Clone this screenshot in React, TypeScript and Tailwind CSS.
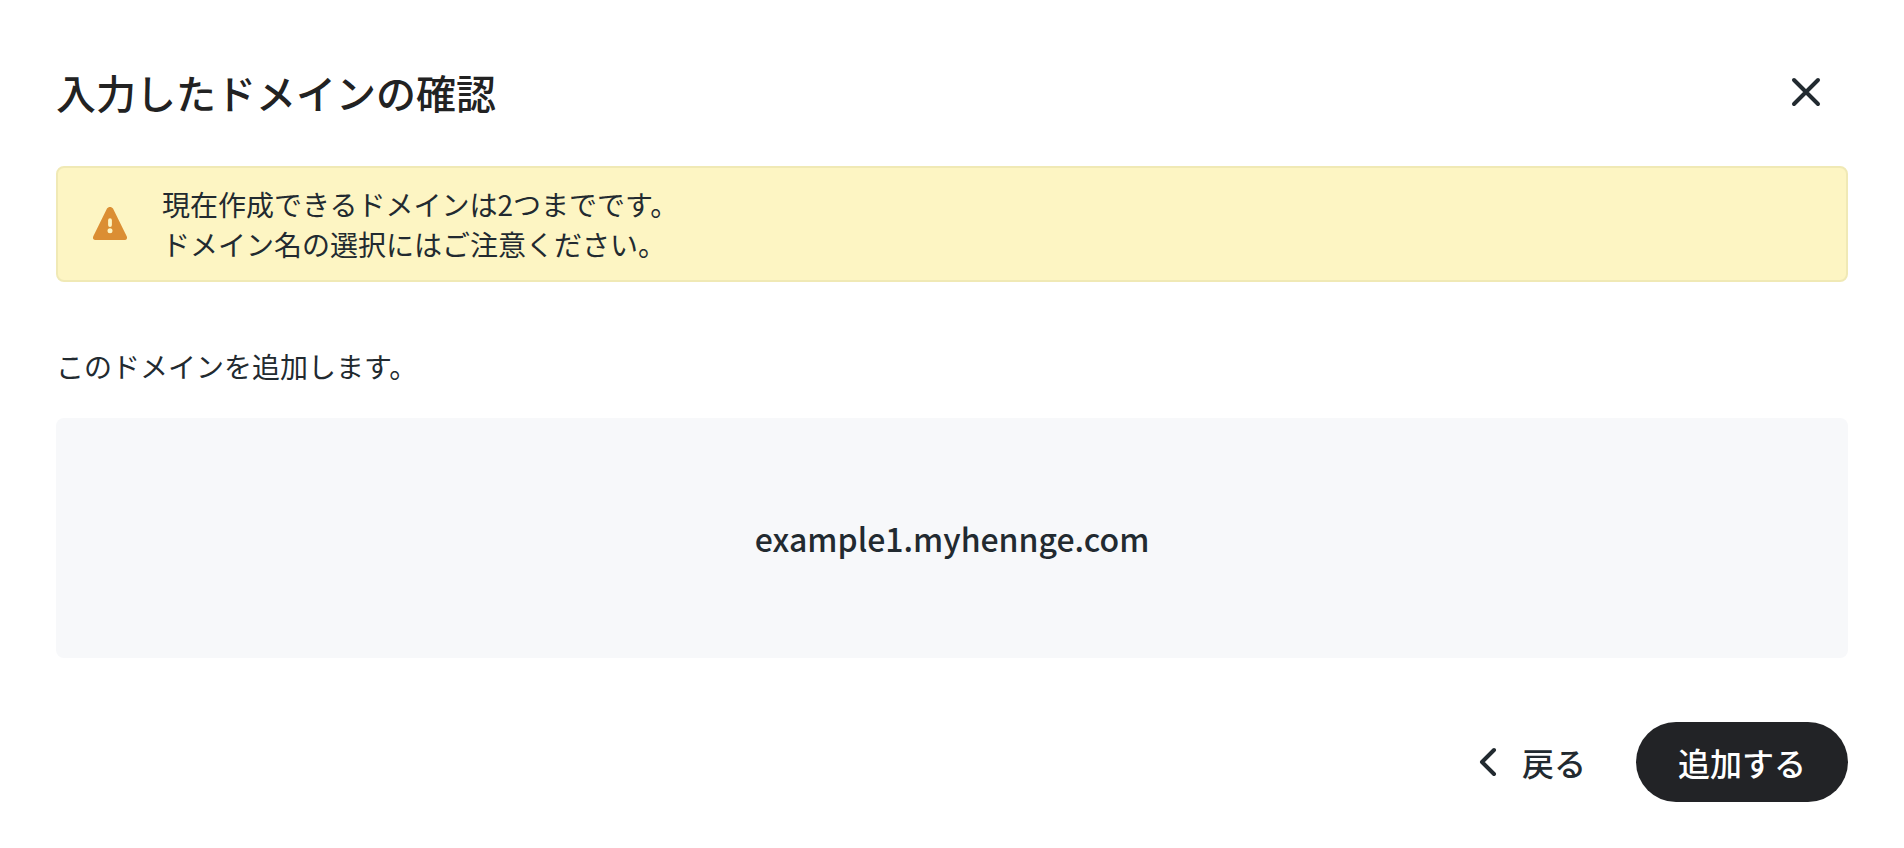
import React from 'react';

const notices = [
  "現在作成できるドメインは2つまでです。",
  "ドメイン名の選択にはご注意ください。"
];

const CloseIcon = () => (
  <svg width="32" height="32" viewBox="0 0 32 32" fill="none" stroke="currentColor" strokeWidth="4" strokeLinecap="round" aria-hidden="true">
    <path d="M4 4L28 28M28 4L4 28" />
  </svg>
);

const WarningIcon = () => (
  <svg width="36" height="36" viewBox="0 0 36 36" className="shrink-0 text-[#db8e33]" aria-hidden="true">
    <path
      fill="currentColor"
      fillRule="evenodd"
      d="M15 2.6C16.2 .4 19.8 .4 21 2.6L34.7 30.2C35.7 32.2 34.6 34 32.4 34H3.6C1.4 34 .3 32.2 1.3 30.2ZM18 12.3A1.9 1.9 0 0 0 16.1 14.2V19A1.9 1.9 0 0 0 19.9 19V14.2A1.9 1.9 0 0 0 18 12.3ZM18 22.3A2.5 2.5 0 1 0 18 27.3A2.5 2.5 0 1 0 18 22.3Z"
    />
  </svg>
);

const BackIcon = () => (
  <svg width="20" height="32" viewBox="0 0 20 32" fill="none" stroke="currentColor" strokeWidth="4" strokeLinecap="round" strokeLinejoin="round" aria-hidden="true">
    <path d="M16 4L4 16L16 28" />
  </svg>
);

export default function App() {
  return (
    <main
      lang="ja"
      className="min-h-screen bg-white px-14 pt-16 pb-11 font-['Noto_Sans_CJK_JP',sans-serif] text-[28px] leading-10 text-[#222a30]"
    >
      {/* Header */}
      <header className="flex items-center justify-between">
        <h1 className="text-[40px] leading-14 font-medium text-[#222222]">入力したドメインの確認</h1>
        <button type="button" aria-label="閉じる" className="mr-6 p-0.5 text-[#222a30]">
          <CloseIcon />
        </button>
      </header>

      {/* Notice */}
      <div role="alert" className="mt-[46px] flex items-center gap-[34px] rounded-lg border-2 border-[#f0e9b5] bg-[#fdf5c3] px-[34px] py-4">
        <WarningIcon />
        <div>
          {notices.map((notice, index) => (
            <p key={index}>{notice}</p>
          ))}
        </div>
      </div>

      {/* Domain */}
      <section>
        <p className="mt-16 mb-8">このドメインを追加します。</p>
        <div className="flex h-60 items-center justify-center rounded-lg bg-[#f7f8fa]">
          <p className="text-[32px] leading-12 font-medium">example1.myhennge.com</p>
        </div>
      </section>

      {/* Actions */}
      <div className="mt-16 flex items-center justify-end gap-[50px] text-[32px] leading-12 font-medium">
        <button type="button" className="flex items-center gap-6">
          <BackIcon />
          戻る
        </button>
        <button type="button" className="rounded-full bg-[#222326] px-[42px] py-4 text-white">
          追加する
        </button>
      </div>
    </main>
  );
}
